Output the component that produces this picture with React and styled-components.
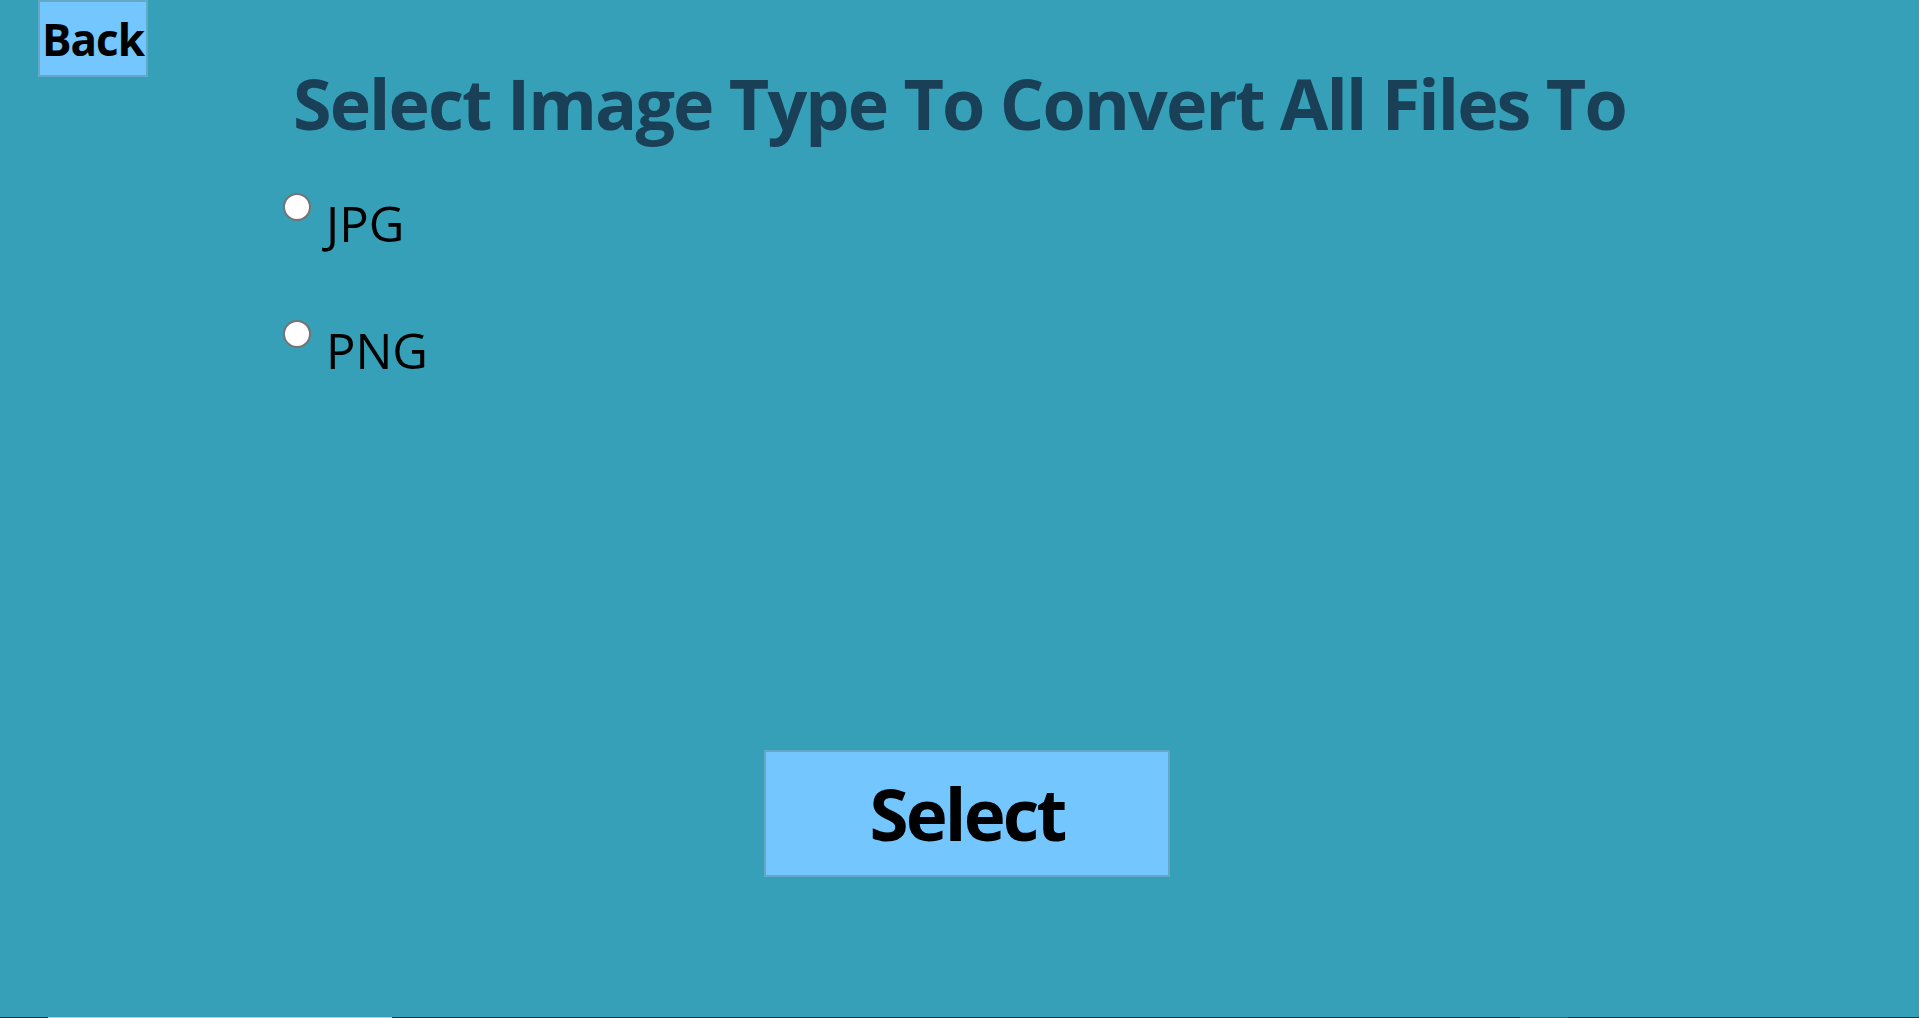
import React, { useState } from "react";
import styled, { createGlobalStyle } from "styled-components";

const GlobalStyle = createGlobalStyle`
  html, body {
    margin: 0;
    padding: 0;
    background: #36a0b8;
  }
  body {
    font-family: "Open Sans", "Noto Sans", sans-serif;
  }
  * { box-sizing: border-box; }
`;

const Page = styled.div`
  min-height: 100vh;
  display: flex;
  flex-direction: column;
  background: #36a0b8;
`;

const Header = styled.div`
  display: flex;
  padding-left: 38px;
`;

const ActionButton = styled.button`
  display: flex;
  align-items: center;
  justify-content: center;
  width: ${(p) => p.$w}px;
  height: ${(p) => p.$h}px;
  padding: 0;
  background: #73c6fe;
  border: 2px solid #65a8c6;
  color: #000;
  font-family: "Open Sans", "Noto Sans", sans-serif;
  font-weight: 700;
  font-size: ${(p) => p.$fs}px;
  line-height: 1;
  letter-spacing: ${(p) => p.$ls || 0}px;
  white-space: nowrap;
  cursor: pointer;
`;

const Content = styled.div`
  display: flex;
  flex-direction: column;
  padding-left: 283px;
`;

const Title = styled.h1`
  margin: 0 0 0 10px;
  color: #1a4058;
  font-family: "Open Sans", "Noto Sans", sans-serif;
  font-weight: 700;
  font-size: 70px;
  line-height: 0.75;
  letter-spacing: -1.9px;
  white-space: nowrap;
`;

const Options = styled.div`
  display: flex;
  flex-direction: column;
  gap: 72px;
  margin-top: 63px;
`;

const OptionRow = styled.label`
  display: flex;
  align-items: flex-start;
  gap: 15px;
  cursor: pointer;
`;

const Radio = styled.input.attrs({ type: "radio" })`
  appearance: none;
  margin: 0;
  width: 28px;
  height: 28px;
  flex: none;
  border-radius: 50%;
  border: 2px solid #747474;
  background: #fff;
  &:checked {
    background: radial-gradient(circle, #0075ff 0 45%, #fff 48%);
  }
`;

const OptionText = styled.span`
  margin-top: 6px;
  font-family: "Open Sans", "Noto Sans", sans-serif;
  font-size: 49px;
  line-height: 1;
  color: #000;
`;

const Footer = styled.div`
  display: flex;
  justify-content: center;
  padding-left: 15px;
  margin-top: 375px;
`;

const Spacer = styled.div`
  flex: 1;
`;

const Taskbar = styled.div`
  height: 1px;
  display: flex;
  background: #2b2b2b;
`;

const TaskSegment = styled.div`
  height: 1px;
  margin-left: ${(p) => p.$ml}px;
  width: ${(p) => p.$w}px;
  background: ${(p) => p.$c};
`;

export default function App() {
  const [type, setType] = useState("");
  return (
    <Page>
      <GlobalStyle />
      <Header>
        <ActionButton $w={110} $h={77} $fs={44} $ls={-1}>Back</ActionButton>
      </Header>
      <Content>
        <Title>Select Image Type To Convert All Files To</Title>
        <Options>
          {["JPG", "PNG"].map((t) => (
            <OptionRow key={t}>
              <Radio
                name="imgtype"
                checked={type === t}
                onChange={() => setType(t)}
              />
              <OptionText>{t}</OptionText>
            </OptionRow>
          ))}
        </Options>
      </Content>
      <Footer>
        <ActionButton $w={406} $h={127} $fs={71} $ls={-2.8}>Select</ActionButton>
      </Footer>
      <Spacer />
      <Taskbar>
        <TaskSegment $ml={48} $w={344} $c="#c8c8c8" />
        <TaskSegment $ml={1128} $w={48} $c="#555555" />
      </Taskbar>
    </Page>
  );
}
